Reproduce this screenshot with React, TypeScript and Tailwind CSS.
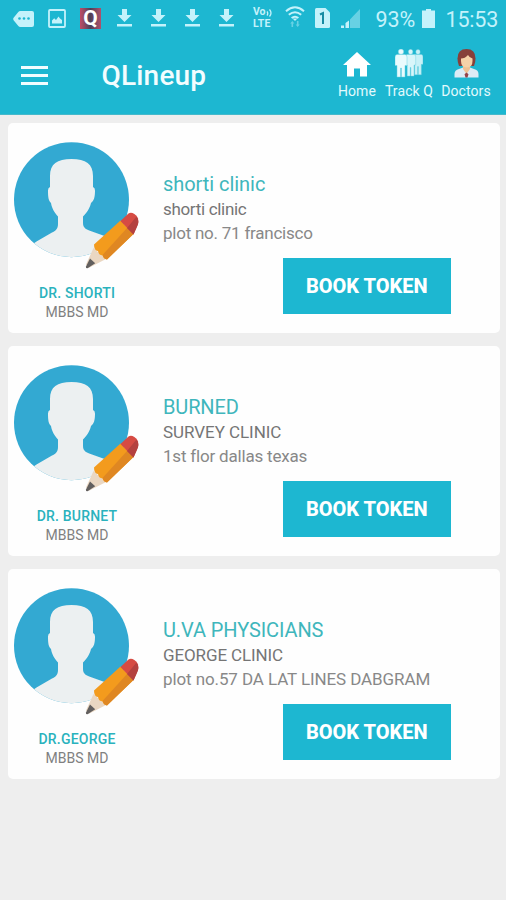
import React from "react";

interface Doctor {
  name: string;
  degree: string;
  clinic: string;
  branch: string;
  address: string;
  clinicClass: string;
  branchClass: string;
  addressClass: string;
}

const doctors: Doctor[] = [
  {
    name: "DR. SHORTI",
    degree: "MBBS MD",
    clinic: "shorti clinic",
    branch: "shorti clinic",
    address: "plot no. 71 francisco",
    clinicClass: "tracking-[-0.05px]",
    branchClass: "tracking-[-0.32px]",
    addressClass: "tracking-[-0.24px]",
  },
  {
    name: "DR. BURNET",
    degree: "MBBS MD",
    clinic: "BURNED",
    branch: "SURVEY CLINIC",
    address: "1st flor dallas texas",
    clinicClass: "tracking-[-0.15px]",
    branchClass: "tracking-[-0.05px]",
    addressClass: "tracking-[-0.19px]",
  },
  {
    name: "DR.GEORGE",
    degree: "MBBS MD",
    clinic: "U.VA PHYSICIANS",
    branch: "GEORGE CLINIC",
    address: "plot no.57 DA LAT LINES DABGRAM",
    clinicClass: "tracking-[-0.1px]",
    branchClass: "tracking-[-0.12px]",
    addressClass: "tracking-[-0.1px]",
  },
];

const DownloadIcon: React.FC = () => (
  <svg className="w-[15px] h-[18px]" viewBox="0 0 15 18" fill="currentColor">
    <path d="M5 0h5v6h4.5L7.5 13 .5 6H5zM0 15h15v2.6H0z" />
  </svg>
);

const StatusBar: React.FC = () => (
  <div className="flex h-[37px] text-[#c4f2fb]">
    <svg className="w-[21px] h-[16px] mt-[11px] ml-[13px]" viewBox="0 0 21 16">
      <path
        d="M7.5 0H19q2 0 2 2v12q0 2-2 2H7.5q-1.5 0-2.4-1.2L.6 9.2Q-.2 8 .6 6.8L5.1 1.2Q6 0 7.5 0z"
        fill="currentColor"
      />
      <g fill="#1db7d1">
        <circle cx="6.5" cy="7.5" r="1.3" />
        <circle cx="11" cy="7.5" r="1.3" />
        <circle cx="15.5" cy="7.5" r="1.3" />
      </g>
    </svg>
    <svg className="w-[18px] h-[19px] mt-[9px] ml-[14px]" viewBox="0 0 18 19">
      <rect x="1" y="1" width="16" height="17" rx="1" fill="none" stroke="currentColor" strokeWidth="1.8" />
      <path d="M4 14.5v-3l2.2-2.2L8 11l2.5-3.5 1.5 2 2 1.5v3.5z" fill="currentColor" />
    </svg>
    <div className="flex items-center justify-center w-[21px] h-[21px] mt-[8px] ml-[14px] bg-linear-to-r from-[#c04a66] via-[#4c4058] to-[#b0506c] text-white text-[21px] leading-none font-bold">
      Q
    </div>
    <div className="flex gap-[19px] mt-[9px] ml-[16px]">
      <DownloadIcon />
      <DownloadIcon />
      <DownloadIcon />
      <DownloadIcon />
    </div>
    <div className="w-[21px] mt-[6px] ml-[19px] text-[10.5px] leading-[12px] font-bold whitespace-nowrap">
      <div className="flex items-center">
        Vo
        <svg className="w-[6px] h-[9px]" viewBox="0 0 6 9" fill="none" stroke="currentColor" strokeWidth="1.3">
          <path d="M1 3.5q1.5 2 0 4M3.5 1.5q3 3.5 0 7" />
        </svg>
      </div>
      <div className="tracking-[0.3px]">LTE</div>
    </div>
    <svg className="w-[20px] h-[21px] mt-[6px] ml-[11px]" viewBox="0 0 20 21">
      <g fill="none" stroke="currentColor" strokeWidth="2">
        <path d="M1 5.2Q10-2.6 19 5.2" />
        <path d="M3.8 8.8q6.2-5 12.4 0" />
        <path d="M6.6 12q3.4-2.6 6.8 0" />
      </g>
      <path d="M7.6 12.5h4.8L10 15z" fill="currentColor" />
      <path d="M5.2 17.5 7.3 15l2.1 2.5H8.1V21H6.5v-3.5zM10.6 18.5h1.3V15h1.6v3.5h1.3L12.7 21z" fill="currentColor" opacity=".45" />
    </svg>
    <svg className="w-[15px] h-[20px] mt-[8px] ml-[10px]" viewBox="0 0 15 20">
      <path d="M1.5 0h9L15 4.5v14q0 1.5-1.5 1.5h-12Q0 20 0 18.5V1.5Q0 0 1.5 0z" fill="currentColor" />
      <path d="M5 6.5 8 5v11" fill="none" stroke="#168ba3" strokeWidth="2" />
    </svg>
    <svg className="w-[19px] h-[19px] mt-[9px] ml-[11px]" viewBox="0 0 19 19" fill="currentColor">
      <path d="M0 16.5h3V19H0zM4.5 14 8 11.5V19H4.5z" />
      <path d="M9 10.5l3.5-3.7V19H9zM12.5 6.8 19 0v19h-6.5z" opacity=".45" />
    </svg>
    <span className="w-[40px] mt-[7px] ml-[15.5px] text-[21.5px] leading-[26px] tracking-[-0.1px]">93%</span>
    <svg className="w-[13px] h-[19px] mt-[9px] ml-[6px]" viewBox="0 0 13 19" fill="currentColor">
      <path d="M4 0h5v1.5h4V19H0V1.5h4z" />
    </svg>
    <span className="mt-[7px] ml-[11px] text-[21.5px] leading-[26px] tracking-[-0.2px]">15:53</span>
  </div>
);

const HomeIcon: React.FC = () => (
  <svg className="w-[28px] h-[25px]" viewBox="0 0 28 25" fill="#fff">
    <path d="M14 0 28 13h-4v11.5h-7v-8h-6v8H4V13H0z" />
  </svg>
);

const PersonShape: React.FC = () => (
  <>
    <circle cx="6" cy="2.7" r="2.7" />
    <path d="M2 5.5h8q2 0 2 2.5v8.5h-2V28H6.4v-9h-.8v9H2V16.5H0V8q0-2.5 2-2.5z" />
  </>
);

const QueueIcon: React.FC = () => (
  <svg className="w-[28px] h-[29px]" viewBox="0 0 28 29" stroke="#6fd0e0" strokeWidth=".5">
    <g transform="translate(18 .5) scale(.83 .9)" fill="#c9f1f7">
      <PersonShape />
    </g>
    <g transform="translate(10.5 .2) scale(.85 .96)" fill="#d8f6fa">
      <PersonShape />
    </g>
    <g fill="#e9fbfd">
      <PersonShape />
    </g>
  </svg>
);

const DoctorIcon: React.FC = () => (
  <svg className="w-[25px] h-[29px]" viewBox="0 0 25 29">
    <path d="M3.5 9.5Q3.5 0 12.5 0t9 9.5q0 4-1.5 7.5H5Q3.5 13.5 3.5 9.5z" fill="#87403a" />
    <path d="M.5 28.5V25q0-4 4.5-5l4-1.5h7l4 1.5q4.5 1 4.5 5v3.5z" fill="#dcebf5" />
    <path d="M9 15h7v5l-3.5 5L9 20z" fill="#eec295" />
    <path d="M7 9.5q4 0 7-3.5 1.5 3 4.5 3.5V12q0 6.5-5.7 6.5T7 12z" fill="#f6d2a8" />
    <path d="m12.5 23.5 2 1.8-1 3.2h-2l-1-3.2z" fill="#94444a" />
  </svg>
);

const Avatar: React.FC = () => (
  <svg className="w-[126px] h-[128px]" viewBox="14 142 126 128">
    <defs>
      <clipPath id="avatarClip">
        <circle cx="71.5" cy="199.7" r="57.5" />
      </clipPath>
    </defs>
    <circle cx="71.5" cy="199.7" r="57.5" fill="#33a9d2" />
    <path
      clipPath="url(#avatarClip)"
      d="M71.5 159C57 159 50 164 50 176v11q-2 .5-2 3.5c0 7 .5 10 3 12.5 1 6 3.5 9.5 7 13.500v7.500c0 5-2.500 7-6 8.500L36.500 241.500 30 246v17h88v-20l-12-6.500-14-5c-6-2-9-3.500-9-8.500v-6.500c4-4 6.500-7.500 8-13.500 3-2.500 4-5.500 4-12.500q0-3-2-3.500V176c0-12-7-17-21.500-17z"
      fill="#ecf0f1"
    />
    <path d="M93.500 248 106 259 89 267.800 86 264.500z" fill="#ead7c2" />
    <path d="m90 258.500 5.200 4.700-7.200 4.800q-2.500 1-2-1.500z" fill="#625f5e" />
    <path d="M94 244.500 120.500 220.500 133.500 234 107 259.500q-3.500-.5-4.500-4-4-.5-4.500-4.500-4-.5-4-6.500z" fill="#f39b1d" />
    <path d="m102.500 255 25-27.500 6 6.500-26.500 25.500q-3-.5-4.500-4.500z" fill="#df8722" />
    <path d="m120.500 221 8-7.500q1.500-1 4-.5 4 1.500 5.500 5.500.5 2.500 0 5L133.500 234.500z" fill="#d64b43" />
    <path d="m127 228 9.500-11.500q2 2.500 2 5.500-.5 3.500-2 6l-3 6.500z" fill="#b4413f" />
  </svg>
);

const DoctorCard: React.FC<{ doctor: Doctor }> = ({ doctor }) => (
  <section className="flex h-[210px] rounded-[5px] bg-[#fefefe]">
    <div className="w-[138px] shrink-0 pt-[19.5px] pl-[6px]">
      <Avatar />
      <div className="w-[126px] mt-[14px] text-center whitespace-nowrap">
        <p className="text-[14px] leading-[18px] font-medium tracking-[0.2px] text-[#2ab2bd]">
          {doctor.name}
        </p>
        <p className="mt-[1px] text-[14px] leading-[18px] text-[#808080]">{doctor.degree}</p>
      </div>
    </div>
    <div className="flex-1 pt-[48px] pl-[17px] whitespace-nowrap">
      <h2 className={`text-[20px] leading-[26px] text-[#3fb6bc] ${doctor.clinicClass}`}>
        {doctor.clinic}
      </h2>
      <p className={`text-[17px] leading-[24px] text-[#757575] ${doctor.branchClass}`}>
        {doctor.branch}
      </p>
      <p className={`mt-[1px] text-[17px] leading-[23px] text-[#888] ${doctor.addressClass}`}>
        {doctor.address}
      </p>
      <button className="block w-[168.5px] h-[56px] mt-[13px] ml-[119.5px] bg-[#1db7d1] text-[20px] font-extrabold text-white">
        BOOK TOKEN
      </button>
    </div>
  </section>
);

const App: React.FC = () => {
  return (
    <div className="w-full h-[900px] overflow-hidden bg-[#eeeeee] font-['Roboto',sans-serif]">
      <header className="h-[115px] bg-[#1db7d1] border-b border-[#45b9cb]">
        <StatusBar />
        <div className="flex">
          <div className="flex flex-col gap-[5px] w-[27px] mt-[29px] ml-[21px]">
            <div className="h-[3px] bg-[#f2fdff]" />
            <div className="h-[3px] bg-[#f2fdff]" />
            <div className="h-[3px] bg-[#f2fdff]" />
          </div>
          <h1 className="w-[221px] mt-[22px] ml-[53.5px] text-[28px] leading-[34px] font-medium tracking-[0.2px] text-[#f2fdff]">
            QLineup
          </h1>
          <nav className="flex mt-[12px] text-[14px] leading-[18px] tracking-[0.1px] text-[#e2fafd] whitespace-nowrap">
            <div className="flex flex-col items-center w-[70px]">
              <div className="h-[33px] pt-[3px]">
                <HomeIcon />
              </div>
              Home
            </div>
            <div className="flex flex-col items-center w-[34px]">
              <div className="h-[33px]">
                <QueueIcon />
              </div>
              Track Q
            </div>
            <div className="flex flex-col items-center w-[80px]">
              <div className="h-[33px]">
                <DoctorIcon />
              </div>
              Doctors
            </div>
          </nav>
        </div>
      </header>
      <main className="flex flex-col gap-[13px] pt-[7.5px] pl-[8px] pr-[6.5px]">
        {doctors.map((doctor) => (
          <DoctorCard key={doctor.name} doctor={doctor} />
        ))}
      </main>
    </div>
  );
};

export default App;
